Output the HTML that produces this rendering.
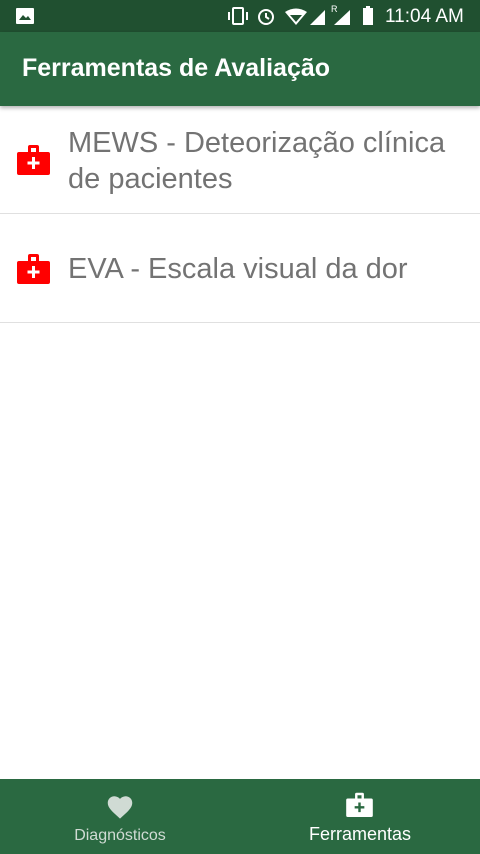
<!DOCTYPE html>
<html><head><style>
body{margin:0;width:480px;height:854px;position:relative;background:#fff;font-family:"Liberation Sans",sans-serif;overflow:hidden}
.sb{position:absolute;top:0;left:0;width:480px;height:32px;background:#205030;color:#fff}
.ab{position:absolute;top:32px;left:0;width:480px;height:74px;background:#2a6941;box-shadow:0 2px 4px rgba(0,0,0,.3)}
.ab div{position:absolute;left:22px;top:22px;color:#fff;font-size:25px;font-weight:bold}
.item{position:absolute;left:0;width:480px;border-bottom:1px solid #e0e0e0}
.item .t{position:absolute;left:68px;font-size:29px;color:#737373;line-height:36px;white-space:nowrap}
.item svg{position:absolute;left:17px}
.bn{position:absolute;top:779px;left:0;width:480px;height:75px;background:#2a6941}
</style></head><body>
<div class="sb">
<svg style="position:absolute;left:16px;top:8px" width="18" height="16"><rect x="0" y="0" width="18" height="16" rx="1" fill="#fff"/><path d="M3 12 L7 7 L10 10 L12 8 L15 12Z" fill="#205030"/></svg>
<svg style="position:absolute;left:226px;top:7px" width="24" height="18"><rect x="7" y="1" width="10" height="16" rx="1" fill="none" stroke="#fff" stroke-width="2"/><rect x="2" y="5" width="2" height="8" fill="#fff"/><rect x="20" y="5" width="2" height="8" fill="#fff"/></svg>
<svg style="position:absolute;left:256px;top:6px" width="20" height="20"><circle cx="10" cy="11" r="7" fill="none" stroke="#fff" stroke-width="2"/><path d="M10 7 V11 L13 13" stroke="#fff" stroke-width="2" fill="none"/></svg>
<svg style="position:absolute;left:284px;top:8px" width="24" height="18"><path d="M1 4 Q12 -3 23 4 L12 17Z" fill="#fff"/><path d="M6 7 L18 7 L12 14Z" fill="#205030"/></svg>
<svg style="position:absolute;left:310px;top:8px" width="16" height="18"><path d="M0 17 L15 2 V17Z" fill="#fff"/></svg>
<span style="position:absolute;left:331px;top:4px;font-size:9px">R</span>
<svg style="position:absolute;left:334px;top:8px" width="18" height="18"><path d="M0 17 L16 2 V17Z" fill="#fff"/></svg>
<svg style="position:absolute;left:362px;top:6px" width="12" height="20"><rect x="1" y="2" width="10" height="17" fill="#fff"/><rect x="4" y="0" width="4" height="2" fill="#fff"/></svg>
<div style="position:absolute;left:385px;top:6px;font-size:19px">11:04 AM</div>
</div>
<div class="ab"><div>Ferramentas de Avaliação</div></div>
<div class="item" style="top:107px;height:106px">
<svg style="top:37px" width="33" height="31" viewBox="0 0 33 31"><path d="M11 8 V3 Q11 1 13 1 H20 Q22 1 22 3 V8 H19 V4 H14 V8Z" fill="#f00"/><rect x="0" y="8" width="33" height="23" rx="2" fill="#f00"/><path d="M15 13 H18 V17.5 H22.5 V20.5 H18 V25 H15 V20.5 H10.5 V17.5 H15Z" fill="#fff"/></svg>
<div class="t" style="top:18px">MEWS - Deteorização clínica<br>de pacientes</div></div>
<div class="item" style="top:214px;height:108px">
<svg style="top:39px" width="33" height="31" viewBox="0 0 33 31"><path d="M11 8 V3 Q11 1 13 1 H20 Q22 1 22 3 V8 H19 V4 H14 V8Z" fill="#f00"/><rect x="0" y="8" width="33" height="23" rx="2" fill="#f00"/><path d="M15 13 H18 V17.5 H22.5 V20.5 H18 V25 H15 V20.5 H10.5 V17.5 H15Z" fill="#fff"/></svg>
<div class="t" style="top:37px">EVA - Escala visual da dor</div></div>
<div class="bn">
<svg style="position:absolute;left:106px;top:15px" width="28" height="26" viewBox="0 0 24 22"><path d="M12 21 L10.5 19.6 C5 14.7 1.5 11.5 1.5 7.5 C1.5 4.3 4 1.8 7.2 1.8 C9 1.8 10.8 2.7 12 4 C13.2 2.7 15 1.8 16.8 1.8 C20 1.8 22.5 4.3 22.5 7.5 C22.5 11.5 19 14.7 13.5 19.6Z" fill="#d0dbd4"/></svg>
<div style="position:absolute;left:0;width:240px;top:48px;text-align:center;color:#d0dbd4;font-size:16px">Diagnósticos</div>
<svg style="position:absolute;left:346px;top:13px" width="27" height="25" viewBox="0 0 33 31"><path d="M11 8 V3 Q11 1 13 1 H20 Q22 1 22 3 V8 H19 V4 H14 V8Z" fill="#fff"/><rect x="0" y="8" width="33" height="23" rx="2" fill="#fff"/><path d="M15 13 H18 V17.5 H22.5 V20.5 H18 V25 H15 V20.5 H10.5 V17.5 H15Z" fill="#2a6941"/></svg>
<div style="position:absolute;left:240px;width:240px;top:45px;text-align:center;color:#fff;font-size:18px">Ferramentas</div>
</div>
</body></html>
